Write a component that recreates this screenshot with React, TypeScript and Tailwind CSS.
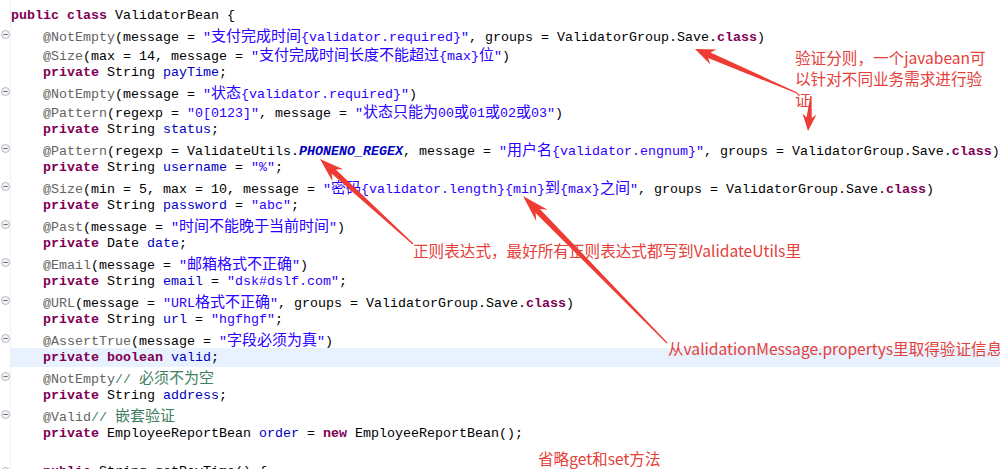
import React from "react";

type Tok = [string, string];

const cls: Record<string, string> = {
  n: "text-black",
  k: "text-[#7f0055] font-bold",
  a: "text-[#646464]",
  s: "text-[#2a00ff]",
  f: "text-[#0000c0]",
  sf: "text-[#0000c0] font-bold italic",
  c: "text-[#3f7f5f]",
  j: "text-[#3f5fbf]",
};

const G = "ValidatorGroup.Save.";

const lines: { toks: Tok[]; fold?: boolean; hl?: boolean }[] = [
  { toks: [[" */", "j"]] },
  { toks: [["public", "k"], [" ", "n"], ["class", "k"], [" ValidatorBean {", "n"]] },
  { fold: true, toks: [["    @NotEmpty", "a"], ["(message = ", "n"], ['"支付完成时间{validator.required}"', "s"], [", groups = " + G, "n"], ["class", "k"], [")", "n"]] },
  { toks: [["    @Size", "a"], ["(max = 14, message = ", "n"], ['"支付完成时间长度不能超过{max}位"', "s"], [")", "n"]] },
  { toks: [["    ", "n"], ["private", "k"], [" String ", "n"], ["payTime", "f"], [";", "n"]] },
  { fold: true, toks: [["    @NotEmpty", "a"], ["(message = ", "n"], ['"状态{validator.required}"', "s"], [")", "n"]] },
  { toks: [["    @Pattern", "a"], ["(regexp = ", "n"], ['"0[0123]"', "s"], [", message = ", "n"], ['"状态只能为00或01或02或03"', "s"], [")", "n"]] },
  { toks: [["    ", "n"], ["private", "k"], [" String ", "n"], ["status", "f"], [";", "n"]] },
  { fold: true, toks: [["    @Pattern", "a"], ["(regexp = ValidateUtils.", "n"], ["PHONENO_REGEX", "sf"], [", message = ", "n"], ['"用户名{validator.engnum}"', "s"], [", groups = " + G, "n"], ["class", "k"], [")", "n"]] },
  { toks: [["    ", "n"], ["private", "k"], [" String ", "n"], ["username", "f"], [" = ", "n"], ['"%"', "s"], [";", "n"]] },
  { fold: true, toks: [["    @Size", "a"], ["(min = 5, max = 10, message = ", "n"], ['"密码{validator.length}{min}到{max}之间"', "s"], [", groups = " + G, "n"], ["class", "k"], [")", "n"]] },
  { toks: [["    ", "n"], ["private", "k"], [" String ", "n"], ["password", "f"], [" = ", "n"], ['"abc"', "s"], [";", "n"]] },
  { fold: true, toks: [["    @Past", "a"], ["(message = ", "n"], ['"时间不能晚于当前时间"', "s"], [")", "n"]] },
  { toks: [["    ", "n"], ["private", "k"], [" Date ", "n"], ["date", "f"], [";", "n"]] },
  { fold: true, toks: [["    @Email", "a"], ["(message = ", "n"], ['"邮箱格式不正确"', "s"], [")", "n"]] },
  { toks: [["    ", "n"], ["private", "k"], [" String ", "n"], ["email", "f"], [" = ", "n"], ['"dsk#dslf.com"', "s"], [";", "n"]] },
  { fold: true, toks: [["    @URL", "a"], ["(message = ", "n"], ['"URL格式不正确"', "s"], [", groups = " + G, "n"], ["class", "k"], [")", "n"]] },
  { toks: [["    ", "n"], ["private", "k"], [" String ", "n"], ["url", "f"], [" = ", "n"], ['"hgfhgf"', "s"], [";", "n"]] },
  { fold: true, toks: [["    @AssertTrue", "a"], ["(message = ", "n"], ['"字段必须为真"', "s"], [")", "n"]] },
  { hl: true, toks: [["    ", "n"], ["private", "k"], [" ", "n"], ["boolean", "k"], [" ", "n"], ["valid", "f"], [";", "n"]] },
  { fold: true, toks: [["    @NotEmpty", "a"], ["// 必须不为空", "c"]] },
  { toks: [["    ", "n"], ["private", "k"], [" String ", "n"], ["address", "f"], [";", "n"]] },
  { fold: true, toks: [["    @Valid", "a"], ["// 嵌套验证", "c"]] },
  { toks: [["    ", "n"], ["private", "k"], [" EmployeeReportBean ", "n"], ["order", "f"], [" = ", "n"], ["new", "k"], [" EmployeeReportBean();", "n"]] },
  { toks: [] },
  { fold: true, toks: [["    ", "n"], ["public", "k"], [" String getPayTime() {", "n"]] },
];

function splitCJK(text: string, key: string) {
  const parts = text.split(/([\u3000-\u9fff\uff00-\uffef]+)/);
  return parts.map((p, i) =>
    /[\u3000-\u9fff\uff00-\uffef]/.test(p) ? (
      <span key={key + i} className="text-[15px] font-normal not-italic [font-family:'Noto_Sans_CJK_SC',sans-serif]">
        {p}
      </span>
    ) : (
      <React.Fragment key={key + i}>{p}</React.Fragment>
    )
  );
}

function Fold() {
  return (
    <svg width="9" height="9" viewBox="0 0 9 9" className="block">
      <circle cx="4.5" cy="4.5" r="4" fill="#f2f4f7" stroke="#a3a8b0" strokeWidth="0.8" />
      <line x1="2.3" y1="4.5" x2="6.7" y2="4.5" stroke="#6b7078" strokeWidth="1" />
    </svg>
  );
}

function arrowPts(x1: number, y1: number, x2: number, y2: number, L: number, W: number, w: number) {
  const dx = x2 - x1;
  const dy = y2 - y1;
  const len = Math.hypot(dx, dy);
  const ux = dx / len;
  const uy = dy / len;
  const nx = -uy;
  const ny = ux;
  const bx = x2 - ux * L * 0.78;
  const by = y2 - uy * L * 0.78;
  const hx = x2 - ux * L;
  const hy = y2 - uy * L;
  const p = [
    [x1 + nx * 0.6, y1 + ny * 0.6],
    [bx + nx * w, by + ny * w],
    [hx + nx * W, hy + ny * W],
    [x2, y2],
    [hx - nx * W, hy - ny * W],
    [bx - nx * w, by - ny * w],
    [x1 - nx * 0.6, y1 - ny * 0.6],
  ];
  return p.map((q) => q[0].toFixed(1) + "," + q[1].toFixed(1)).join(" ");
}

const note = "absolute text-[15.6px] leading-[21px] text-[#e5403a] [font-family:'Noto_Sans_CJK_SC',sans-serif] whitespace-nowrap";

export default function App() {
  return (
    <div className="relative w-[1000px] h-[469px] overflow-hidden bg-white">
      <div className="mt-[-13px] [font-family:'Liberation_Mono','Noto_Sans_CJK_SC',monospace] text-[13.33px]">
        {lines.map((ln, i) => (
          <div key={i} className="flex h-[19px] leading-[19px]">
            <div className="w-[11px] shrink-0 flex items-center justify-center border-r border-[#f0f0f0]">
              {ln.fold ? <Fold /> : null}
            </div>
            <div className={"flex-1 whitespace-pre overflow-hidden " + (ln.hl ? "bg-[#e8f2fe]" : "")}>
              {ln.toks.map((t, j) => (
                <span key={j} className={cls[t[1]]}>
                  {splitCJK(t[0], i + "-" + j + "-")}
                </span>
              ))}
            </div>
          </div>
        ))}
      </div>

      <svg className="absolute inset-0 pointer-events-none" width="1000" height="469" viewBox="0 0 1000 469">
        <polygon points={arrowPts(797, 93, 695, 49, 20, 8, 3)} fill="#ee3b33" />
        <polygon points={arrowPts(811, 96, 808, 131, 17, 7, 2.6)} fill="#ee3b33" />
        <polygon points={arrowPts(413, 244, 320, 159, 24, 8, 3)} fill="#ee3b33" />
        <polygon points={arrowPts(667, 343, 523, 196, 27, 8, 3)} fill="#ee3b33" />
      </svg>

      <div className={note + " left-[795px] top-[47px]"}>
        <div>验证分则，一个javabean可</div>
        <div>以针对不同业务需求进行验</div>
        <div>证</div>
      </div>
      <div className={note + " left-[413px] top-[240px]"}>正则表达式，最好所有正则表达式都写到ValidateUtils里</div>
      <div className={note + " left-[668px] top-[338px]"}>从validationMessage.propertys里取得验证信息</div>
      <div className={note + " left-[538px] top-[448px]"}>省略get和set方法</div>
    </div>
  );
}
